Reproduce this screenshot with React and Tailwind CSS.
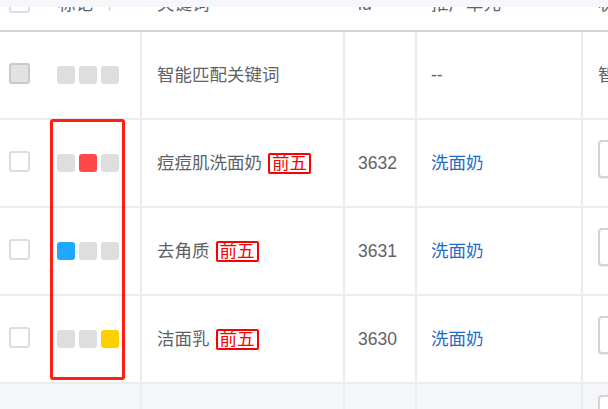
import React from 'react';

const rows = [
    { kw: '智能匹配关键词', tag: false, id: '', unit: '--', mark: -1, disabled: true },
    { kw: '痘痘肌洗面奶', tag: true, id: '3632', unit: '洗面奶', mark: 1 },
    { kw: '去角质', tag: true, id: '3631', unit: '洗面奶', mark: 0 },
    { kw: '洁面乳', tag: true, id: '3630', unit: '洗面奶', mark: 2 },
];

const markColors = ['bg-[#20a8ff]', 'bg-[#ff4848]', 'bg-[#ffd000]'];

const grid = "grid grid-cols-[48px_94px_203px_72px_166px_120px]";

const Marks = ({ active }) => (
    <div className="flex gap-[4px]">
        {[0, 1, 2].map(i => (
            <span
                key={i}
                className={"w-[18px] h-[18px] rounded-[3px] " + (i === active ? markColors[i] : "bg-[#dedede]")}
            />
        ))}
    </div>
);

const Checkbox = ({ disabled }) => (
    <span
        className={
            "block w-[21px] h-[21px] rounded-[3px] border-2 " +
            (disabled ? "bg-[#e2e2e2] border-[#c9c9c9]" : "bg-white border-[#dcdde2]")
        }
    />
);

const App = () => {
    return (
        <div
            className="relative w-[608px] h-[409px] overflow-hidden bg-white text-[17.5px] text-[#606266]"
            style={{ fontFamily: '"Liberation Sans", "Noto Sans CJK SC", sans-serif' }}
        >
            <div className="h-[7px] bg-[#f5f7fa]" />

            {/* header, scrolled so only the lower half shows */}
            <div className={grid + " h-[25px] border-b-2 border-[#d2d2d2] overflow-hidden"}>
                <div className="pl-[9px] -mt-[15px]"><Checkbox /></div>
                <div className="pl-[10px] -mt-[12px] leading-[18px] flex gap-[12px]">
                    <span>标记</span>
                    <span className="text-[#a9b3c2]">↑</span>
                </div>
                <div className="pl-[15px] -mt-[12px] leading-[18px]">关键词</div>
                <div className="pl-[13px] -mt-[12px] leading-[18px]">id</div>
                <div className="pl-[14px] -mt-[12px] leading-[18px]">推广单元</div>
                <div className="pl-[15px] -mt-[12px] leading-[18px]">状态</div>
            </div>

            {rows.map((r, idx) => (
                <div key={idx} className={grid + " h-[88px] border-b-2 border-[#ececec]"}>
                    <div className="pl-[9px] flex items-center pb-[4px]">
                        <Checkbox disabled={r.disabled} />
                    </div>
                    <div className="pl-[9px] flex items-center border-r-2 border-[#ececec]">
                        <Marks active={r.mark} />
                    </div>
                    <div className="pl-[15px] flex items-center gap-[6px] border-r-2 border-[#ececec]">
                        <span>{r.kw}</span>
                        {r.tag && (
                            <span className="border-2 border-[#ff0000] rounded-[2px] text-[#ff0000] leading-[17px] px-[2px]">
                                前五
                            </span>
                        )}
                    </div>
                    <div className="pl-[13px] flex items-center border-r-2 border-[#ececec]">{r.id}</div>
                    <div className={"pl-[14px] flex items-center border-r-2 border-[#ececec] " + (r.unit === '--' ? "" : "text-[#1f6bc8]")}>
                        {r.unit}
                    </div>
                    <div className="pl-[15px] flex items-center">
                        {r.disabled ? (
                            <span>智能</span>
                        ) : (
                            <span className="block w-[80px] h-[38px] mb-[8px] rounded-[4px] border-2 border-[#d4d4d4] bg-white shadow-[0_1px_1px_rgba(0,0,0,0.08)]" />
                        )}
                    </div>
                </div>
            ))}

            <div className={grid + " h-[30px] bg-[#f4f6f9]"}>
                <div />
                <div className="border-r-2 border-[#eceef1]" />
                <div className="border-r-2 border-[#eceef1]" />
                <div className="border-r-2 border-[#eceef1]" />
                <div className="border-r-2 border-[#eceef1]" />
                <div className="pl-[15px] pt-[11px]">
                    <span className="block w-[80px] h-[38px] rounded-[4px] border-2 border-[#d4d4d4] bg-white" />
                </div>
            </div>

            {/* red annotation frame around the mark column */}
            <div className="absolute left-[50px] top-[119px] w-[75px] h-[261px] border-[3px] border-[#ff1e14] rounded-[3px] pointer-events-none" />
        </div>
    );
};

export default App;
